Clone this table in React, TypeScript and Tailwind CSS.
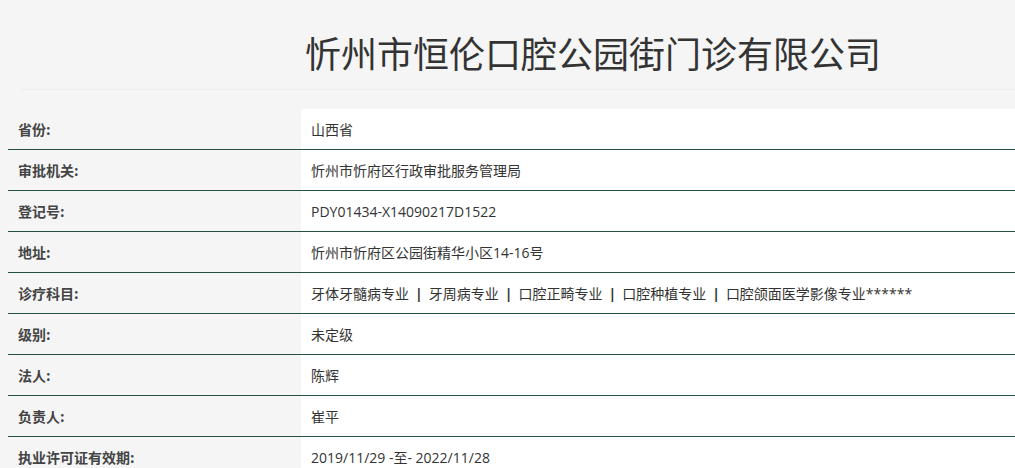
import React from 'react';

const rows: { label: string; value: string }[] = [
  { label: '省份:', value: '山西省' },
  { label: '审批机关:', value: '忻州市忻府区行政审批服务管理局' },
  { label: '登记号:', value: 'PDY01434-X14090217D1522' },
  { label: '地址:', value: '忻州市忻府区公园街精华小区14-16号' },
  {
    label: '诊疗科目:',
    value: '牙体牙髓病专业 | 牙周病专业 | 口腔正畸专业 | 口腔种植专业 | 口腔颌面医学影像专业******',
  },
  { label: '级别:', value: '未定级' },
  { label: '法人:', value: '陈辉' },
  { label: '负责人:', value: '崔平' },
  { label: '执业许可证有效期:', value: '2019/11/29 -至- 2022/11/28' },
];

const font = { fontFamily: '"Noto Sans CJK SC", "Noto Sans", sans-serif' };
const valueFont = { fontFamily: '"Open Sans", "Noto Sans CJK SC", sans-serif' };

const App = () => {
  return (
    <div className="w-[1015px] h-[468px] overflow-hidden bg-[#f5f5f5] text-[#333]" style={font}>
      {/* Header */}
      <div className="h-[90px] ml-[20px] border-b border-[#ededed] flex items-center">
        <h1 className="pl-[285px] pt-[14px] text-[36px] font-normal text-[#333] leading-none">
          忻州市恒伦口腔公园街门诊有限公司
        </h1>
      </div>
      <div className="h-[19px]" />

      {/* Info table */}
      <div className="ml-[8px]">
        {rows.map((row) => (
          <div key={row.label} className="flex h-[41px] border-b border-[#24503f]">
            <div className="w-[293px] shrink-0 flex items-center pl-[10px] text-[14px] font-bold text-[#444]">
              {row.label}
            </div>
            <div
              className="flex-1 bg-white flex items-center pl-[10px] text-[14px] text-[#333] whitespace-pre"
              style={valueFont}
            >
              {row.value.split(' | ').map((part, i, arr) => (
                <React.Fragment key={i}>
                  {part}
                  {i < arr.length - 1 && <span className="px-[6px] font-bold">|</span>}
                </React.Fragment>
              ))}
            </div>
          </div>
        ))}
      </div>
    </div>
  );
};

export default App;
